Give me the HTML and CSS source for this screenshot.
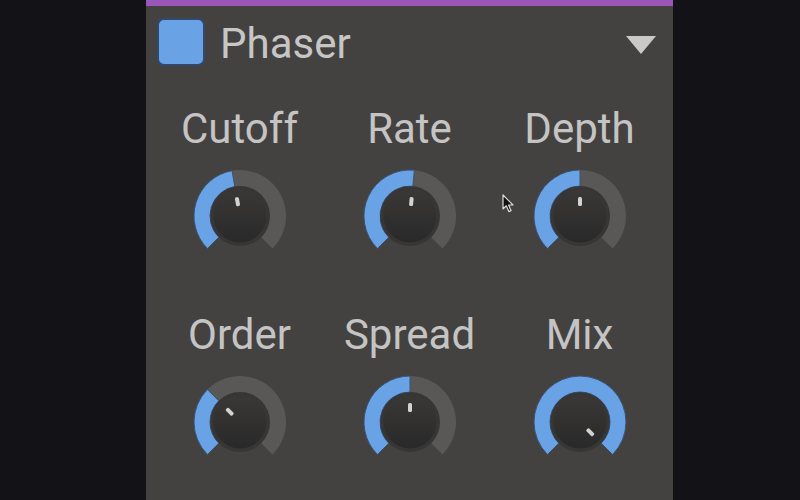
FILE: index.html
```html
<!DOCTYPE html>
<html lang="en">
<head>
    <meta charset="UTF-8">
    <meta name="viewport" content="width=device-width, initial-scale=1.0">
    <title>Phaser</title>
    <link rel="stylesheet" href="styles.css">
</head>
<body>
    <div class="device">
        <div class="device-header">
            <div class="device-toggle"></div>
            <h1 class="device-name">Phaser</h1>
            <div class="device-menu"></div>
        </div>
        <div class="knob-grid">
            <div class="knob-cell">
                <span class="knob-label">Cutoff</span>
                <svg class="knob" viewBox="0 0 96 96" data-value="0.463"></svg>
            </div>
            <div class="knob-cell">
                <span class="knob-label">Rate</span>
                <svg class="knob" viewBox="0 0 96 96" data-value="0.52"></svg>
            </div>
            <div class="knob-cell">
                <span class="knob-label">Depth</span>
                <svg class="knob" viewBox="0 0 96 96" data-value="0.5"></svg>
            </div>
            <div class="knob-cell">
                <span class="knob-label">Order</span>
                <svg class="knob" viewBox="0 0 96 96" data-value="0.333"></svg>
            </div>
            <div class="knob-cell">
                <span class="knob-label">Spread</span>
                <svg class="knob" viewBox="0 0 96 96" data-value="0.5"></svg>
            </div>
            <div class="knob-cell">
                <span class="knob-label">Mix</span>
                <svg class="knob" viewBox="0 0 96 96" data-value="1"></svg>
            </div>
        </div>
        <svg class="cursor" width="13" height="19" viewBox="0 0 13 19">
            <path d="M1 1 L1 15 L4.3 11.8 L6.8 17.6 L9 16.6 L6.6 11 L11 11 Z" fill="#111" stroke="#ddd" stroke-width="1.2" stroke-linejoin="round"/>
        </svg>
    </div>
    <script src="script.js"></script>
</body>
</html>
```

FILE: styles.css
```css
body {
    margin: 0;
    background-color: #131217;
    font-family: Roboto, "Liberation Sans", sans-serif;
    height: 500px;
    overflow: hidden;
}
.device {
    position: relative;
    width: 527px;
    height: 494px;
    margin-left: 146px;
    background-color: #444241;
    border-top: 6px solid #9a56b8;
}
.device-header {
    display: flex;
    align-items: center;
    padding: 12px 17px 0 11px;
    height: 48px;
}
.device-toggle {
    width: 44px;
    height: 44px;
    background-color: #6aa2e6;
    border: 2px solid #33496a;
    border-radius: 7px;
}
.device-name {
    margin: 3px 0 0 15px;
    flex: 1;
    font-size: 42px;
    font-weight: normal;
    color: #c6c6c6;
    line-height: 48px;
}
.device-menu {
    width: 0;
    height: 0;
    border-left: 15px solid transparent;
    border-right: 15px solid transparent;
    border-top: 18px solid #c9c9c9;
    margin-top: 6px;
}
.knob-grid {
    display: grid;
    grid-template-columns: repeat(3, 170px);
    justify-content: center;
    row-gap: 46px;
    padding-top: 38px;
}
.knob-cell {
    display: flex;
    flex-direction: column;
    align-items: center;
}
.knob-label {
    font-size: 42px;
    line-height: 50px;
    color: #c4c4c4;
}
.knob {
    width: 96px;
    height: 96px;
    margin-top: 14px;
}
.cursor {
    position: absolute;
    left: 356px;
    top: 188px;
}
```

FILE: script.js
```js
// draw each knob from its data-value (0..1), sweep of 270 degrees
const NS = "http://www.w3.org/2000/svg";
const START = -135, SWEEP = 270;

function pt(angle, r) {
    const a = angle * Math.PI / 180;
    return (48 + r * Math.sin(a)).toFixed(2) + " " + (48 - r * Math.cos(a)).toFixed(2);
}

function sector(a0, a1, r0, r1) {
    const large = a1 - a0 > 180 ? 1 : 0;
    return "M" + pt(a0, r1) + " A" + r1 + " " + r1 + " 0 " + large + " 1 " + pt(a1, r1) +
        " L" + pt(a1, r0) + " A" + r0 + " " + r0 + " 0 " + large + " 0 " + pt(a0, r0) + " Z";
}

function el(name, attrs) {
    const node = document.createElementNS(NS, name);
    for (const k in attrs) node.setAttribute(k, attrs[k]);
    return node;
}

document.querySelectorAll(".knob").forEach((svg, i) => {
    const value = parseFloat(svg.dataset.value);
    const end = START + SWEEP * value;

    const defs = el("defs", {});
    const grad = el("linearGradient", { id: "knobFace" + i, x1: 0, y1: 0, x2: 0, y2: 1 });
    grad.appendChild(el("stop", { offset: "0", "stop-color": "#393837" }));
    grad.appendChild(el("stop", { offset: "1", "stop-color": "#2a2929" }));
    defs.appendChild(grad);
    svg.appendChild(defs);

    svg.appendChild(el("path", { d: sector(START, START + SWEEP, 30, 46), fill: "#5a5857" }));
    if (value > 0) {
        svg.appendChild(el("path", { d: sector(START, end, 30, 46), fill: "#6aa2e6", stroke: "#3a5372", "stroke-width": 1 }));
    }
    svg.appendChild(el("circle", { cx: 48, cy: 48, r: 30, fill: "rgba(0,0,0,0.18)" }));
    svg.appendChild(el("circle", { cx: 48, cy: 48, r: 26.5, fill: "url(#knobFace" + i + ")" }));
    svg.appendChild(el("rect", {
        x: 46, y: 29, width: 4, height: 9, rx: 1.5, fill: "#d2d2d2",
        transform: "rotate(" + end + " 48 48)"
    }));
});
```
